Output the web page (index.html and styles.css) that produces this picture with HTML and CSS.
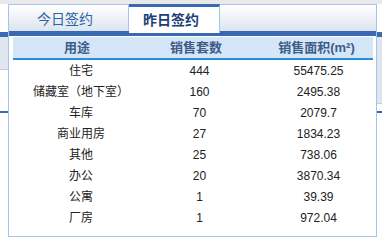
FILE: index.html
```html
<!DOCTYPE html>
<html lang="zh-CN">
<head>
<meta charset="utf-8">
<title>签约统计</title>
<link rel="stylesheet" href="styles.css">
</head>
<body>
<div class="backdrop">
  <div class="bd-top"></div>
  <div class="bd-white"></div>
  <div class="bd-bar"></div>
  <div class="bd-row">
    <div class="bd-col">
      <div class="bd-fill bd-fill-l"></div>
      <div class="bd-line"></div>
      <div class="bd-gap bd-gap-l"></div>
      <div class="bd-blue"></div>
    </div>
    <div class="bd-col">
      <div class="bd-fill bd-fill-r"></div>
      <div class="bd-line"></div>
      <div class="bd-gap bd-gap-r"></div>
      <div class="bd-blue"></div>
    </div>
  </div>
</div>

<div class="panel">
  <div class="tabs">
    <div class="tab tab-today">今日签约</div>
    <div class="tab tab-active">昨日签约</div>
    <div class="tab-fill"></div>
  </div>
  <div class="tab-bar"></div>
  <div class="content">
    <div class="thead">
      <div class="th">用途</div>
      <div class="th">销售套数</div>
      <div class="th th-area">销售面积(m²)</div>
    </div>
    <div class="tbody">
      <div class="tr"><div class="td">住宅</div><div class="td">444</div><div class="td td-area">55475.25</div></div>
      <div class="tr"><div class="td">储藏室（地下室）</div><div class="td">160</div><div class="td td-area">2495.38</div></div>
      <div class="tr"><div class="td">车库</div><div class="td">70</div><div class="td td-area">2079.7</div></div>
      <div class="tr"><div class="td">商业用房</div><div class="td">27</div><div class="td td-area">1834.23</div></div>
      <div class="tr"><div class="td">其他</div><div class="td">25</div><div class="td td-area">738.06</div></div>
      <div class="tr"><div class="td">办公</div><div class="td">20</div><div class="td td-area">3870.34</div></div>
      <div class="tr"><div class="td">公寓</div><div class="td">1</div><div class="td td-area">39.39</div></div>
      <div class="tr"><div class="td">厂房</div><div class="td">1</div><div class="td td-area">972.04</div></div>
    </div>
  </div>
</div>
</body>
</html>
```
FILE: styles.css
```css
* { box-sizing: border-box; }
html, body {
  margin: 0;
  padding: 0;
  background: #ffffff;
  font-family: "Liberation Sans", "Noto Sans CJK SC", sans-serif;
}
body {
  width: 382px;
  height: 244px;
  position: relative;
  overflow: hidden;
}

/* background page */
.bd-top { height: 4px; background: #e9e9e9; }
.bd-white { height: 28px; background: #ffffff; }
.bd-bar { height: 5px; background: #3a69b4; }
.bd-row { display: flex; }
.bd-col { flex: 1; display: flex; flex-direction: column; }
.bd-fill { background: #dfe6ef; }
.bd-fill-l { height: 32px; }
.bd-fill-r { height: 66px; }
.bd-line { height: 1px; background: #c9ccd1; }
.bd-gap-l { height: 41px; }
.bd-gap-r { height: 7px; }
.bd-blue { height: 2px; background: #3a69b4; }

/* popup panel */
.panel {
  position: absolute;
  left: 8px;
  top: 4px;
  width: 369px;
  height: 233px;
  border: 1px solid #a6c3f0;
  background: #ffffff;
}
.tabs {
  display: flex;
  align-items: flex-start;
  height: 26px;
  background: linear-gradient(#ffffff, #dce4ee);
}
.tab {
  height: 26px;
  font-size: 14px;
  line-height: 28px;
  white-space: nowrap;
}
.tab-today {
  width: 120px;
  padding-left: 28px;
  color: #2d62a8;
  border-right: 1px solid #a6c3f0;
}
.tab-active {
  position: relative;
  z-index: 1;
  width: 91px;
  height: 29px;
  margin-top: -1px;
  padding-left: 14px;
  background: #ffffff;
  border-top: 3px solid #3a69b4;
  border-right: 1px solid #a6c3f0;
  color: #1d3f74;
  font-weight: bold;
  line-height: 26px;
}
.tab-fill { flex: 1; height: 26px; }
.tab-bar { height: 5px; background: #3a69b4; }

.content {
  padding: 1px 3px 0 4px;
}
.thead {
  display: grid;
  grid-template-columns: 128px 110px 1fr;
  height: 23px;
  background: #d4e6f8;
  border-bottom: 2px solid #2590d8;
}
.th {
  text-align: center;
  font-size: 13px;
  font-weight: bold;
  line-height: 22px;
  color: #3d5c87;
  white-space: nowrap;
}
.th-area { padding-left: 9px; }
.tbody { padding-top: 1px; }
.tr {
  display: grid;
  grid-template-columns: 136px 101px 1fr;
  height: 21px;
}
.td {
  text-align: center;
  font-size: 12px;
  line-height: 21px;
  color: #222222;
  white-space: nowrap;
  text-spacing-trim: space-all;
}
.td-area { padding-left: 14px; }
```
